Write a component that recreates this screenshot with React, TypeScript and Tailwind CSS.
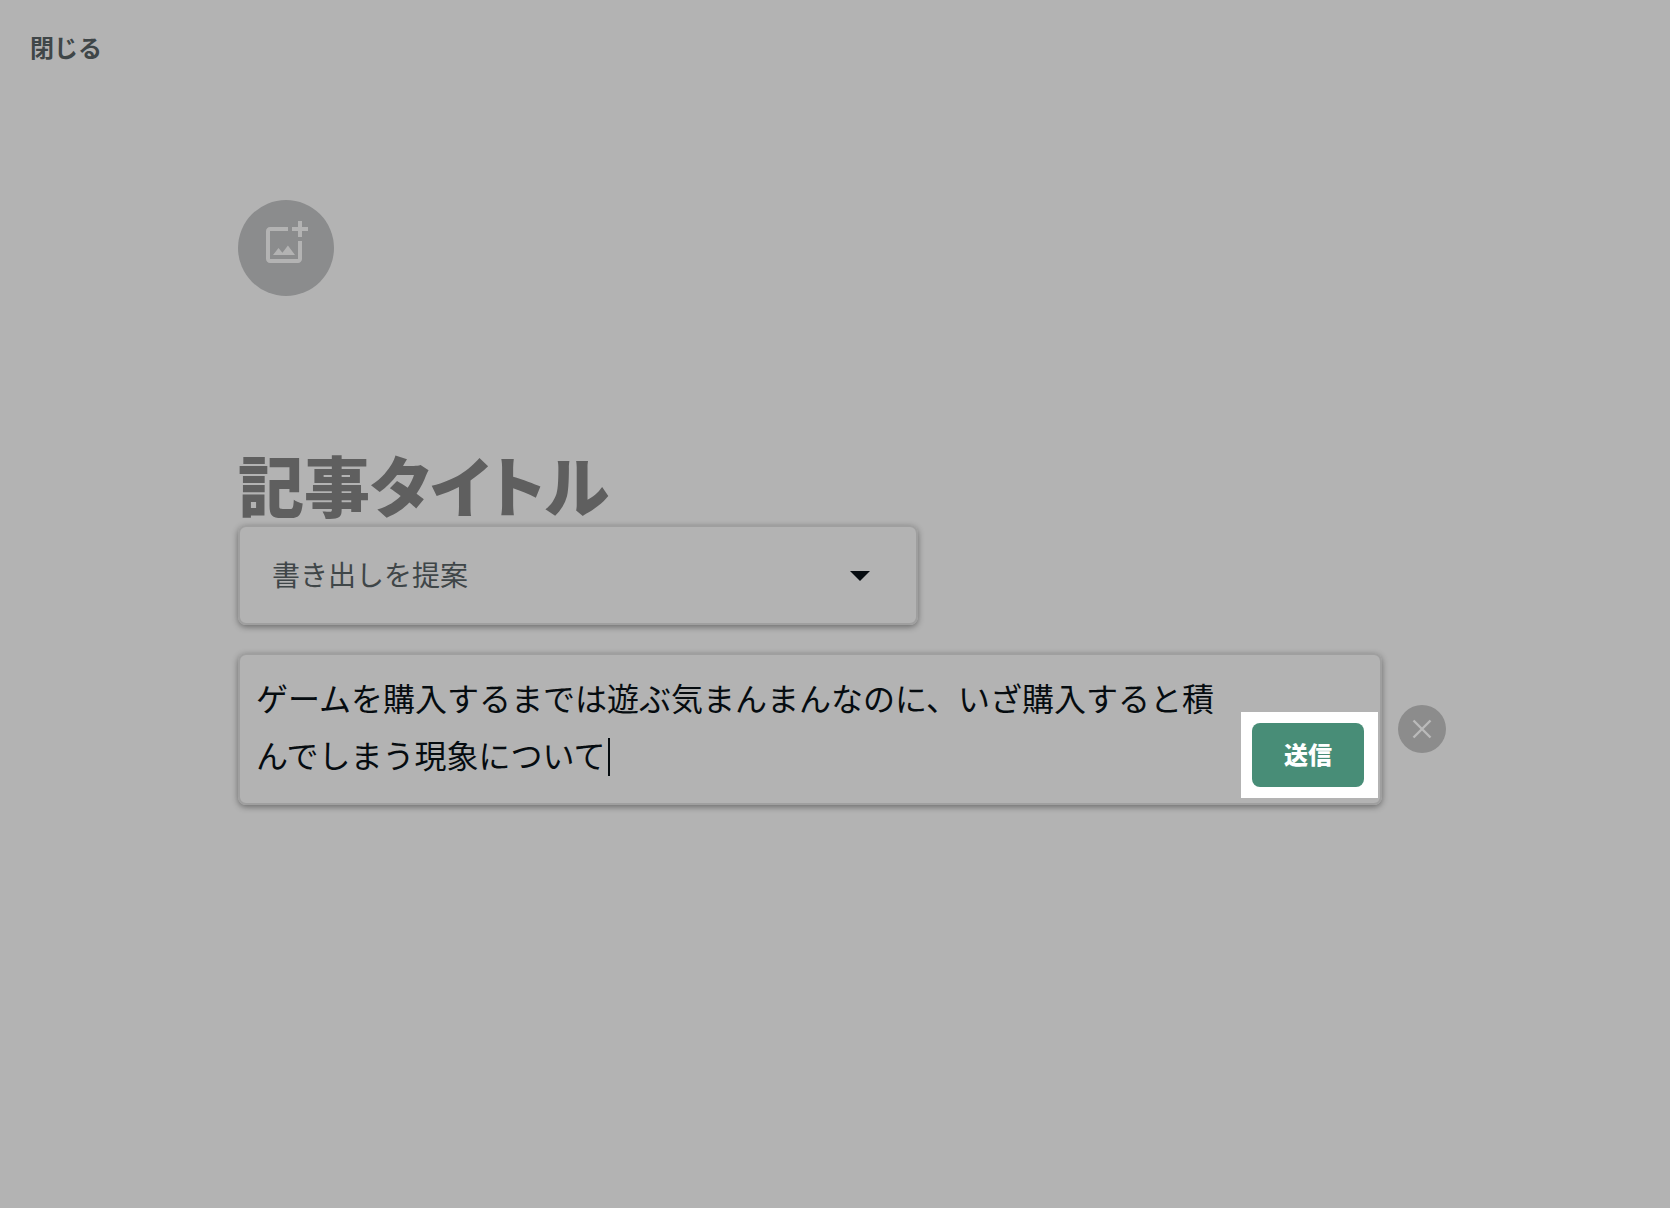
import React, { useState } from 'react';

const AddPhotoIcon = () => (
  <svg width="48" height="48" viewBox="0 0 24 24" fill="currentColor" aria-hidden="true">
    <path d="M18 20H4V6h9V4H4c-1.1 0-2 .9-2 2v14c0 1.1.9 2 2 2h14c1.1 0 2-.9 2-2v-9h-2v9zm-7.79-3.17l-1.96-2.36L5.5 18h11l-3.54-4.71zM20 4V1h-2v3h-3c.01.01 0 2 0 2h3v2.99c.01.01 2 0 2 0V6h3V4h-3z" />
  </svg>
);

const CloseIcon = () => (
  <svg width="20" height="20" viewBox="0 0 20 20" fill="none" stroke="currentColor" strokeWidth="2.4" aria-hidden="true">
    <path d="M1.5 1.5l17 17M18.5 1.5l-17 17" />
  </svg>
);

const CaretDownIcon = () => (
  <svg width="20" height="10" viewBox="0 0 20 10" fill="currentColor" aria-hidden="true">
    <path d="M0 0h20L10 10z" />
  </svg>
);

interface PromptSelectProps {
  value: string;
  onChange: (value: string) => void;
}

const PromptSelect: React.FC<PromptSelectProps> = ({ value, onChange }) => (
  <div className="relative w-full max-w-[680px] rounded-lg border-2 border-[#9f9f9f] shadow-[0_2px_6px_rgba(0,0,0,0.4)]">
    <select
      aria-label="提案の種類"
      value={value}
      onChange={(e) => onChange(e.target.value)}
      className="block h-24 w-full appearance-none bg-transparent px-8 pb-0.5 text-[28px] text-[#3f4648] outline-none"
    >
      <option value="opening">書き出しを提案</option>
    </select>
    <span className="pointer-events-none absolute inset-y-0 right-[46px] flex items-center pt-0.5 text-[#060c10]">
      <CaretDownIcon />
    </span>
  </div>
);

interface PromptFormProps {
  text: string;
  onChange: (text: string) => void;
}

const PromptForm: React.FC<PromptFormProps> = ({ text, onChange }) => (
  <form className="flex items-center gap-4" onSubmit={(e) => e.preventDefault()}>
    <div className="flex flex-1 items-end rounded-lg border-2 border-[#9f9f9f] shadow-[0_2px_6px_rgba(0,0,0,0.4)]">
      <div className="relative flex-1">
        <textarea
          aria-label="提案の内容"
          rows={2}
          value={text}
          onChange={(e) => onChange(e.target.value)}
          className="block w-full resize-none overflow-hidden bg-transparent px-4 pt-[14px] pb-5 text-[32px] leading-[57px] text-[#060c10] outline-none"
        />
        {/* Text cursor */}
        <span className="pointer-events-none absolute bottom-[27px] left-[368px] h-[38px] w-[2px] bg-[#060c10]" />
      </div>

      {/* Highlighted submit */}
      <div className="mr-[2px] mb-[5px] bg-white py-[11px] pr-[14px] pl-[11px]">
        <button type="submit" className="block h-16 w-28 rounded-lg bg-[#488d77] pb-0.5 text-2xl font-black text-white">
          送信
        </button>
      </div>
    </div>

    <button
      type="button"
      aria-label="提案を閉じる"
      className="flex size-12 items-center justify-center rounded-full bg-[#8c8c8c] text-[#bababa]"
    >
      <CloseIcon />
    </button>
  </form>
);

export default function App() {
  const [title, setTitle] = useState('');
  const [kind, setKind] = useState('opening');
  const [text, setText] = useState(
    'ゲームを購入するまでは遊ぶ気まんまんなのに、いざ購入すると積んでしまう現象について'
  );

  return (
    <div
      lang="ja"
      className="min-h-screen bg-[#b3b3b3] font-['Noto_Sans_CJK_JP',sans-serif]"
    >
      <header className="flex h-24 items-center px-[30px] pb-0.5">
        <button type="button" className="text-2xl font-bold text-[#3f4648]">
          閉じる
        </button>
      </header>

      <main className="pt-[104px] pr-[224px] pl-[238px]">
        <button
          type="button"
          aria-label="見出し画像を追加"
          className="flex size-24 items-center justify-center rounded-full bg-[#8b8c8d] pb-[10px] text-[#b3b3b3]"
        >
          <AddPhotoIcon />
        </button>

        <input
          type="text"
          aria-label="記事タイトル"
          placeholder="記事タイトル"
          value={title}
          onChange={(e) => setTitle(e.target.value)}
          className="mt-[147px] block h-[82px] w-full bg-transparent pb-0.5 text-[66px] leading-20 font-black text-[#060c10] outline-none [font-feature-settings:'palt'] placeholder:text-[#5f5f5f]"
        />

        <div className="flex flex-col gap-7">
          <PromptSelect value={kind} onChange={setKind} />
          <PromptForm text={text} onChange={setText} />
        </div>
      </main>
    </div>
  );
}
